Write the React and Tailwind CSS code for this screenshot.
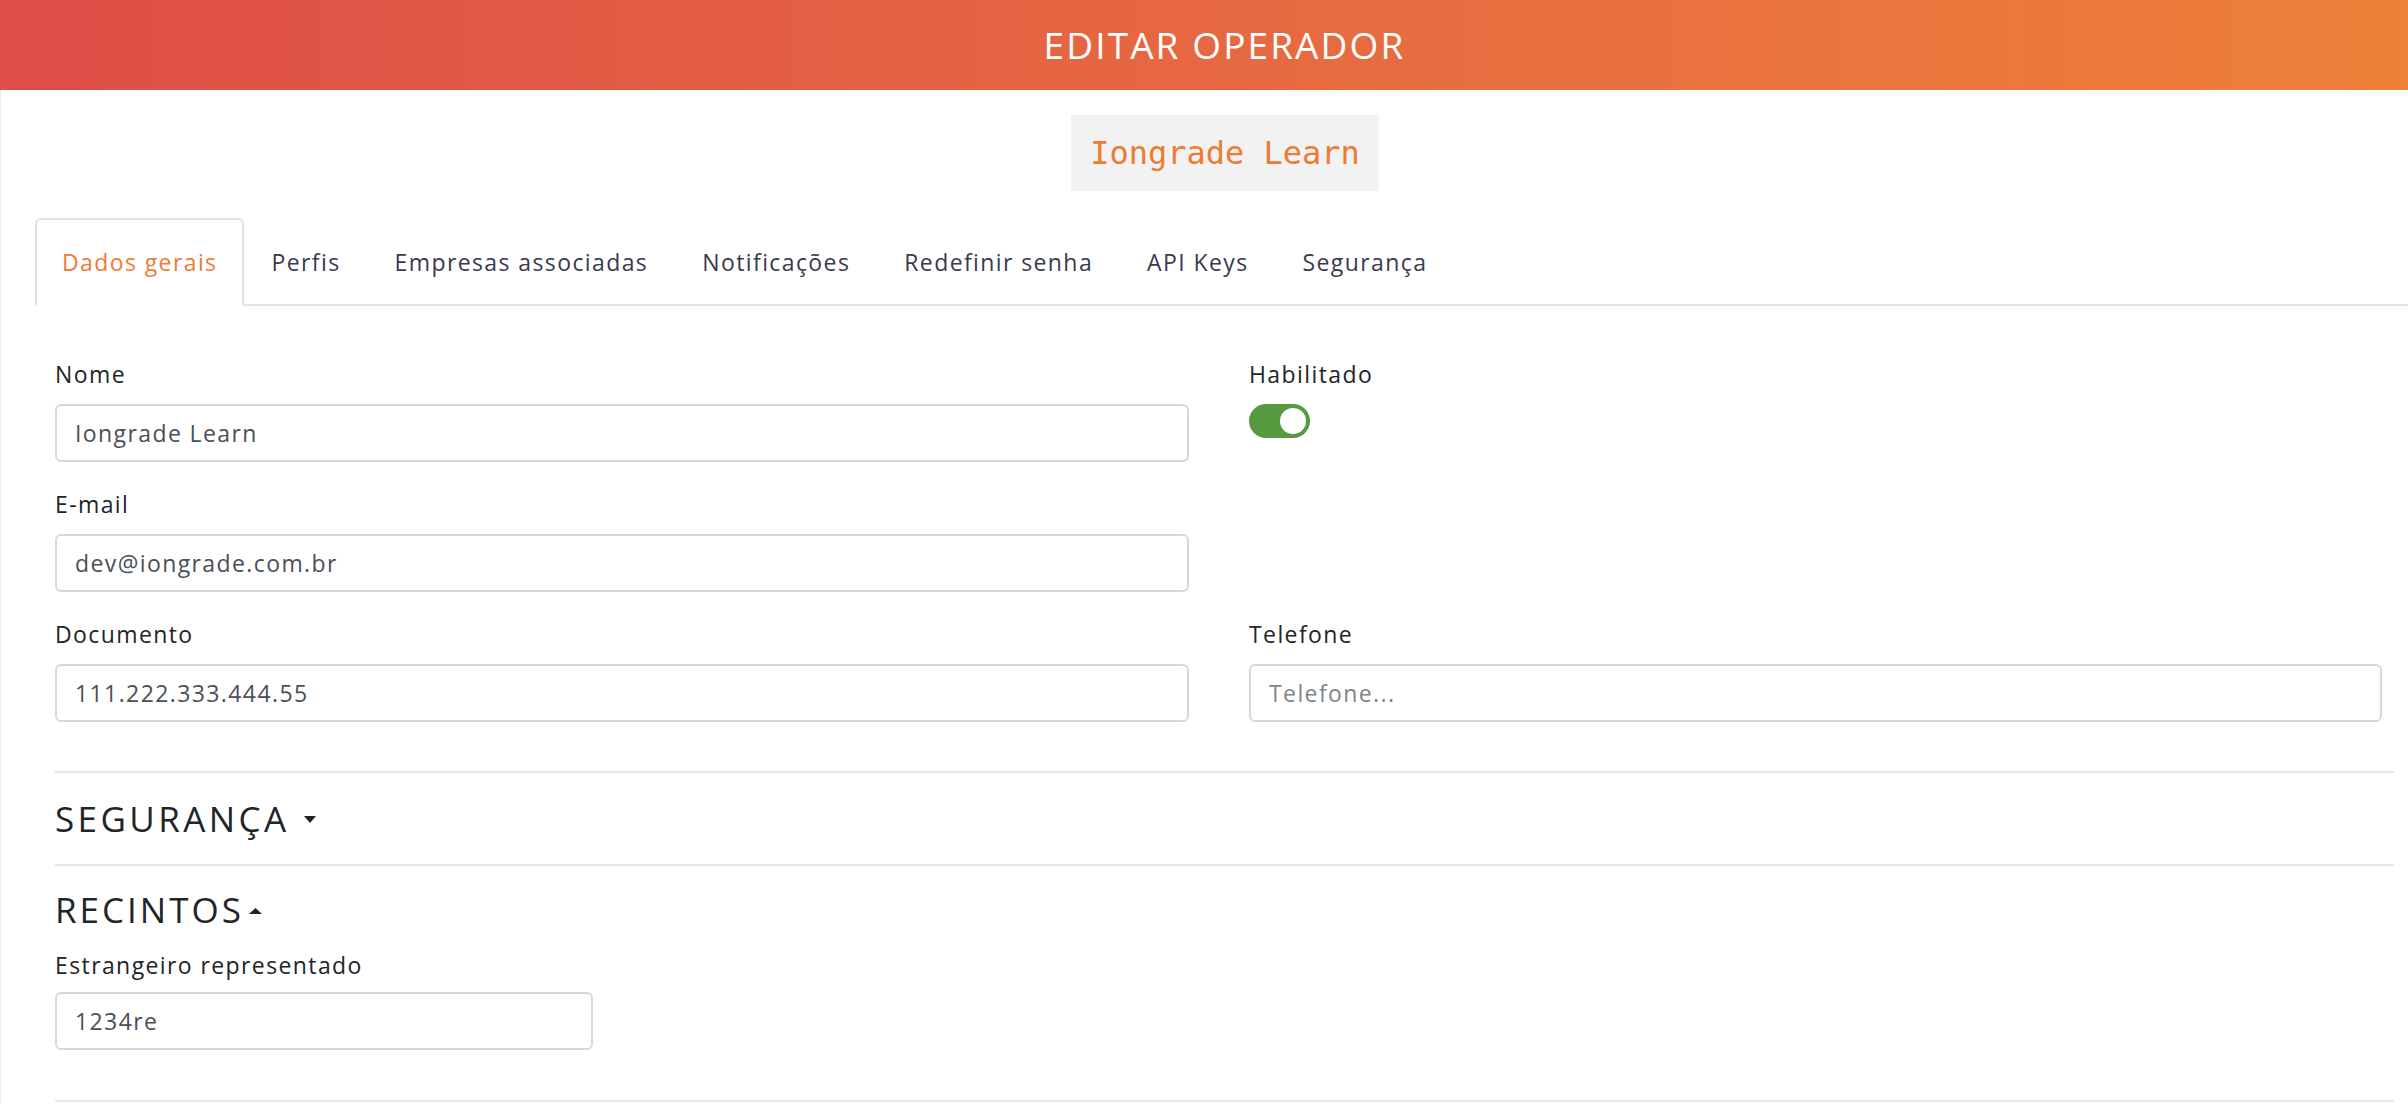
import { useState } from 'react';

const tabs = ['Dados gerais', 'Perfis', 'Empresas associadas', 'Notificações', 'Redefinir senha', 'API Keys', 'Segurança'];

const Field = ({ label, value, placeholder, className = '', inputClass = 'w-full', gap = 'mt-[14px]' }) => (
  <div className={className}>
    <label className="block text-[23px] leading-[32px] tracking-[1.4px] text-[#212529]">{label}</label>
    <input
      type="text"
      defaultValue={value}
      placeholder={placeholder}
      className={`${gap} ${inputClass} block h-[58px] rounded-[6px] border-2 border-[#d5d9de] bg-white px-[18px] text-[23px] tracking-[1.4px] text-[#495057] outline-none placeholder:text-[#7d848b]`}
    />
  </div>
);

const CaretDown = () => (
  <svg width="12" height="7" viewBox="0 0 12 7" className="shrink-0">
    <path d="M0 0 L12 0 L6 7 Z" fill="#212529" />
  </svg>
);

const CaretUp = () => (
  <svg width="13" height="6" viewBox="0 0 13 6" className="shrink-0">
    <path d="M0 6 L13 6 L6.5 0 Z" fill="#212529" />
  </svg>
);

const App = () => {
  const [activeTab, setActiveTab] = useState('Dados gerais');
  const [enabled, setEnabled] = useState(true);

  return (
    <div className="min-h-screen bg-white font-['Open_Sans',sans-serif]">
      <header className="flex h-[90px] items-center justify-center bg-linear-to-r from-[#de4d47] to-[#ee8039] pl-[41px]">
        <h1 className="text-[37px] tracking-[2.1px] text-white">EDITAR OPERADOR</h1>
      </header>

      <div className="border-l border-[#ececec] pb-[10px]">
        {/* Logo */}
        <div className="flex justify-center pl-[41px] pt-[25px]">
          <div className="flex h-[76px] w-[308px] items-center justify-center bg-[#f2f2f2] font-['DejaVu_Sans_Mono',monospace] text-[32px] text-[#ef7a34]">
            Iongrade Learn
          </div>
        </div>

        {/* Tabs */}
        <div className="ml-[34px] mt-[27px] flex border-b-2 border-[#dee2e6]">
          {tabs.map((tab) => (
            <button
              key={tab}
              onClick={() => setActiveTab(tab)}
              className={`-mb-[2px] flex h-[88px] items-center rounded-t-[6px] border-2 px-[25px] text-[23px] tracking-[1.4px] ${
                activeTab === tab
                  ? 'border-[#dee2e6] border-b-white bg-white text-[#ef7a34]'
                  : 'border-transparent text-[#393a4f]'
              }`}
            >
              {tab}
            </button>
          ))}
        </div>

        <div className="pl-[54px] pr-[14px]">
          {/* Dados gerais */}
          <div className="grid grid-cols-[1134px_1133px] gap-x-[60px] gap-y-[26px] pt-[52px]">
            <Field label="Nome" value="Iongrade Learn" />
            <div>
              <label className="block text-[23px] leading-[32px] tracking-[1.4px] text-[#212529]">Habilitado</label>
              <button
                onClick={() => setEnabled(!enabled)}
                className={`mt-[14px] flex h-[34px] w-[61px] items-center rounded-full px-[4px] ${
                  enabled ? 'justify-end bg-[#559a3f]' : 'justify-start bg-[#c9ccd0]'
                }`}
              >
                <span className="h-[26px] w-[26px] rounded-full bg-white" />
              </button>
            </div>
            <Field label="E-mail" value="dev@iongrade.com.br" />
            <div />
            <Field label="Documento" value="111.222.333.444.55" />
            <Field label="Telefone" placeholder="Telefone..." />
          </div>

          <div className="mt-[49px] h-[2px] bg-[#e6e6e6]" />

          {/* Segurança */}
          <div className="flex h-[91px] items-center">
            <h2 className="text-[35px] leading-[48px] tracking-[3.4px] text-[#212529]">SEGURANÇA</h2>
            <span className="ml-[15px] mt-[2px]">
              <CaretDown />
            </span>
          </div>

          <div className="h-[2px] bg-[#e6e6e6]" />

          {/* Recintos */}
          <div className="pt-[20px]">
            <div className="flex items-center">
              <h2 className="text-[35px] leading-[48px] tracking-[3px] text-[#212529]">RECINTOS</h2>
              <span className="ml-[5px] mt-[2px]">
                <CaretUp />
              </span>
            </div>
            <Field
              className="mt-[15px]"
              gap="mt-[11px]"
              inputClass="w-[538px]"
              label="Estrangeiro representado"
              value="1234re"
            />
          </div>

          <div className="mt-[50px] h-[2px] bg-[#e6e6e6]" />
        </div>
      </div>
    </div>
  );
};

export default App;
